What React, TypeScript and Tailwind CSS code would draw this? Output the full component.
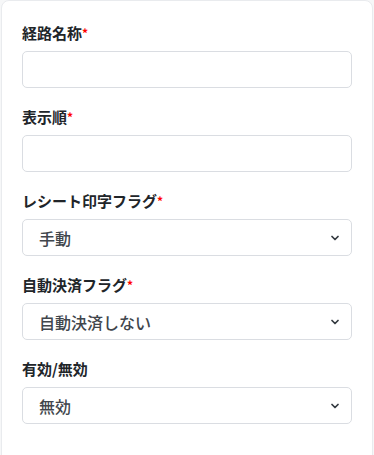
import { ChevronDown } from "lucide-react"

const font = { fontFamily: '"Noto Sans CJK JP", "Noto Sans", sans-serif' }

function Label({ text, required }: { text: string; required?: boolean }) {
  return (
    <label className="block text-[15px] leading-[21px] font-bold text-[#212529] mb-2">
      {text}
      {required && <span className="text-[#ff0000] text-[12px] align-top">*</span>}
    </label>
  )
}

function SelectBox({ value }: { value: string }) {
  return (
    <div className="flex items-center justify-between h-[37px] border border-[#dadde2] rounded-[5px] bg-white pl-4 pr-[10px]">
      <span className="text-[16px] font-medium text-[#41464c]">{value}</span>
      <ChevronDown size={12} strokeWidth={3.5} className="text-[#343a40]" />
    </div>
  )
}

export default function App() {
  return (
    <div className="w-[374px] h-[455px] bg-[#f6f7f8] overflow-hidden" style={font}>
      <div className="ml-px w-[372px] h-[470px] bg-white border border-[#e9ebee] rounded-lg px-5 pt-[21px]">
        <div className="mb-[18px]">
          <Label text="経路名称" required />
          <div className="h-[37px] border border-[#dadde2] rounded-[5px] bg-white" />
        </div>
        <div className="mb-[18px]">
          <Label text="表示順" required />
          <div className="h-[37px] border border-[#dadde2] rounded-[5px] bg-white" />
        </div>
        <div className="mb-[18px]">
          <Label text="レシート印字フラグ" required />
          <SelectBox value="手動" />
        </div>
        <div className="mb-[18px]">
          <Label text="自動決済フラグ" required />
          <SelectBox value="自動決済しない" />
        </div>
        <div className="mb-[18px]">
          <Label text="有効/無効" />
          <SelectBox value="無効" />
        </div>
      </div>
    </div>
  )
}
